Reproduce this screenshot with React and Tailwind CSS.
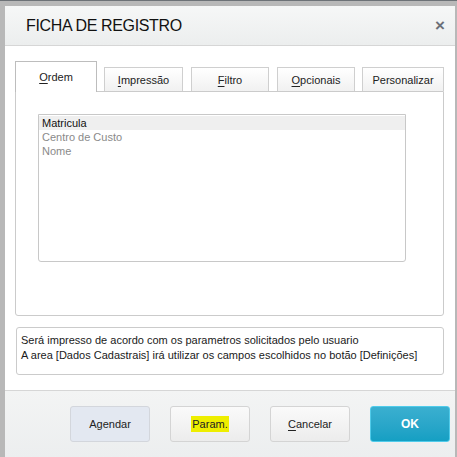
const tabs = [
  { label: 'Ordem', key: 'O', rest: 'rdem', w: 'w-[82px]', active: true },
  { label: 'Impressão', key: 'I', rest: 'mpressão', w: 'w-[79px] ml-[7px]' },
  { label: 'Filtro', key: 'F', rest: 'iltro', w: 'w-[78px] ml-[8px]' },
  { label: 'Opcionais', key: 'O', rest: 'pcionais', w: 'w-[78px] ml-[8px]' },
  { label: 'Personalizar', key: '', rest: 'Personalizar', w: 'w-[82px] ml-[7px]' },
]

function Tab({ tab }) {
  if (tab.active) {
    return (
      <div className={`${tab.w} h-[31px] -mb-px bg-white border border-[#bdbdbd] border-b-0 flex items-start justify-center pt-[7px] relative z-10`}>
        <span>
          <span className="underline underline-offset-2">{tab.key}</span>
          {tab.rest}
        </span>
      </div>
    )
  }
  return (
    <div className={`${tab.w} h-[24px] bg-gradient-to-b from-white to-[#f1f1f1] border border-[#cfcfcf] border-b-0 flex items-center justify-center pt-[2px]`}>
      <span>
        {tab.key && <span className="underline underline-offset-2">{tab.key}</span>}
        {tab.rest}
      </span>
    </div>
  )
}

function Button({ children, className = '' }) {
  return (
    <button className={`w-[80px] h-[36px] rounded-[3px] border flex items-center justify-center text-[11px] ${className}`}>
      {children}
    </button>
  )
}

export default function App() {
  return (
    <div
      className="w-[457px] h-[457px] bg-[#b8b8b8] overflow-hidden border-t border-[#6d7277] pt-[5px] pl-[5px] pr-[2px] text-[11px] text-[#222]"
      style={{ fontFamily: '"Liberation Sans", Arial, sans-serif' }}
    >
      <div className="h-full bg-white flex flex-col">
        <header className="h-[40px] shrink-0 bg-gradient-to-b from-[#f6f7f7] to-[#eceeee] border-b border-[#d6d6d6] flex items-center justify-between pl-[21px] pr-[10px]">
          <h1 className="text-[16px] tracking-[-0.35px] text-[#111] pt-[1px]">FICHA DE REGISTRO</h1>
          <span className="text-[17px] font-bold text-[#6b6f78] leading-none">×</span>
        </header>

        <div className="flex-1 pl-[10px] pr-[11px] pt-[15px]">
          <div className="flex items-end">
            {tabs.map((t) => (
              <Tab key={t.label} tab={t} />
            ))}
          </div>
          <div className="h-[225px] border border-[#cbcbcb] rounded-b-[3px] pt-[22px] pl-[22px] pr-[37px]">
            <div className="h-[148px] border border-[#c8c8c8] rounded-b-[3px] pt-px">
              <div className="h-[14px] bg-[#efefef] pl-[3px] leading-[14px] text-[#111]">Matricula</div>
              <div className="h-[14px] pl-[3px] leading-[14px] text-[#8a8a8a]">Centro de Custo</div>
              <div className="h-[14px] pl-[3px] leading-[14px] text-[#8a8a8a]">Nome</div>
            </div>
          </div>

          <div className="mt-[11px] ml-px h-[48px] border border-[#cbcbcb] rounded-[3px] px-[4px] pt-[5px] leading-[15px] text-[#1a1a1a]">
            <div>Será impresso de acordo com os parametros solicitados pelo usuario</div>
            <div>A area [Dados Cadastrais] irá utilizar os campos escolhidos no botão [Definições]</div>
          </div>
        </div>

        <footer className="h-[67px] shrink-0 border-t border-[#d6d6d6] bg-gradient-to-b from-[#f3f4f4] to-[#eceeef] flex items-start justify-end gap-[20px] pt-[15px] pr-[5px]">
          <Button className="bg-[#e3e8f1] border-[#d3d6dc]">Agendar</Button>
          <Button className="bg-gradient-to-b from-[#fafafa] to-[#ececec] border-[#d4d4d4]">
            <span className="bg-[#eeee00] px-px">Param.</span>
          </Button>
          <Button className="bg-gradient-to-b from-[#fafafa] to-[#ececec] border-[#d4d4d4]">
            <span>
              <span className="underline underline-offset-2">C</span>ancelar
            </span>
          </Button>
          <Button className="bg-gradient-to-b from-[#3aafd0] to-[#149fc3] border-[#50cbea] text-white font-bold text-[12px]">
            OK
          </Button>
        </footer>
      </div>
    </div>
  )
}
